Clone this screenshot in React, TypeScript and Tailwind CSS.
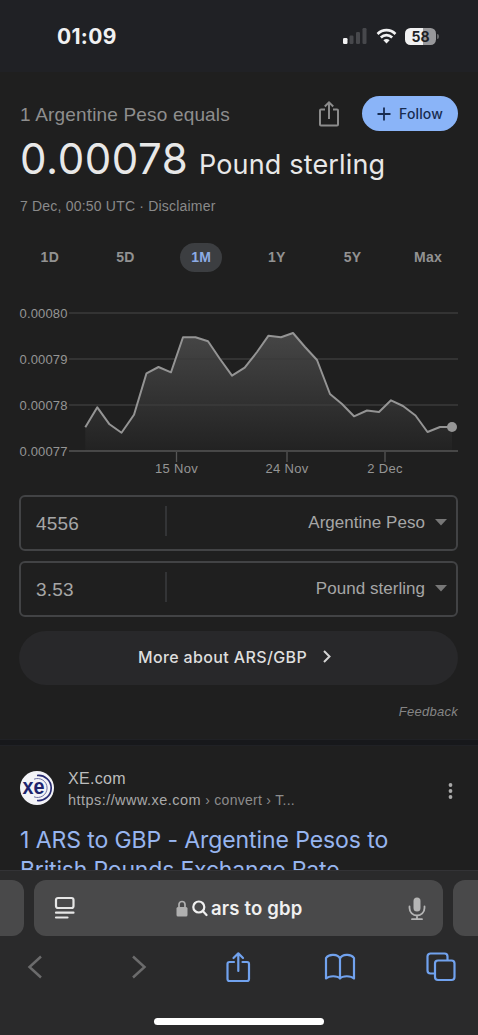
import React from 'react'

const ranges = ["1D", "5D", "1M", "1Y", "5Y", "Max"]

const gridLines = [
  { label: "0.00080", y: 313 },
  { label: "0.00079", y: 359 },
  { label: "0.00078", y: 405 },
  { label: "0.00077", y: 451 }
]

const dates = [
  { label: "15 Nov", x: 176.5 },
  { label: "24 Nov", x: 287 },
  { label: "2 Dec", x: 385 }
]

const points = [
  [85.3, 427.3], [97.3, 407.3], [109.5, 424.3], [121.5, 432.7], [134, 414.7],
  [146.5, 373.3], [158.5, 367], [171, 372.3], [183, 337.3], [195.5, 337.3],
  [208, 341.3], [220, 359], [232, 375.7], [244.7, 367.7], [257, 352],
  [268.5, 335.7], [281, 337.3], [293, 333], [305, 347], [317, 360],
  [330, 394], [342, 404], [354, 416.3], [367, 410.5], [379, 412],
  [391, 400.3], [403, 406], [415.5, 415.5], [427.5, 432], [440, 427], [452, 427]
]

const line = points.map((p) => p.join(',')).join(' ')

const rows = [
  { amount: "4556", currency: "Argentine Peso" },
  { amount: "3.53", currency: "Pound sterling" }
]

function StatusBar() {
  return (
    <header className="flex h-[72px] items-center justify-between bg-[#202125] pl-[57px] pr-[39px]">
      <span className="pt-px text-[21px] font-bold tracking-[0.015em] text-[#f1f1f2]">01:09</span>
      <div className="flex items-center">
        <svg width="25" height="18" viewBox="0 0 25 18">
          <rect x="0" y="11" width="4.5" height="6" rx="1.2" fill="#f1f1f2" />
          <rect x="6.5" y="8.5" width="4" height="8.5" rx="1.2" fill="#47484c" />
          <rect x="13" y="5" width="4" height="12" rx="1.2" fill="#47484c" />
          <rect x="19.5" y="1" width="4" height="16" rx="1.2" fill="#47484c" />
        </svg>
        <svg className="ml-2 mr-[2px]" width="21" height="17" viewBox="0 0 22 18" fill="none" stroke="#f1f1f2" strokeWidth="2.8">
          <path d="M1.5 6.3C7 .9 15 .9 20.5 6.3" />
          <path d="M5 10c3.5-3.3 8.5-3.3 12 0" />
          <path d="M7.7 13c1.9-1.7 4.7-1.7 6.6 0L11 16.5Z" fill="#f1f1f2" stroke="none" />
        </svg>
        <div className="ml-[6px] flex h-[17px] w-[31px] items-center justify-center overflow-hidden rounded-[5.5px] bg-[linear-gradient(90deg,#f1f1f2_58%,#98989b_58%)]">
          <span className="text-[14px] font-bold leading-[17px] text-[#202125]">58</span>
        </div>
        <div className="ml-px h-[5px] w-[2px] rounded-r bg-[#66676a]" />
      </div>
    </header>
  )
}

function Chart() {
  return (
    <svg className="-mx-5 block w-[478px]" height="190" viewBox="0 295 478 190">
      <defs>
        <linearGradient id="area" gradientUnits="userSpaceOnUse" x1="0" y1="333" x2="0" y2="451">
          <stop offset="0" stopColor="#464646" />
          <stop offset="1" stopColor="#222222" />
        </linearGradient>
      </defs>
      <polygon points={`85.3,451 ${line} 452,451`} fill="url(#area)" />
      {gridLines.map((g, i) => (
        <g key={g.label}>
          <path d={`M69 ${g.y}H458`} stroke={i === 3 ? '#565656' : '#3b3b3b'} strokeWidth="1.5" />
          <text x="19.5" y={g.y + 4.5} textLength="48" fontSize="13" fill="#959595">{g.label}</text>
        </g>
      ))}
      {dates.map((d) => (
        <g key={d.label}>
          <path d={`M${d.x} 452V462`} stroke="#565656" strokeWidth="1.3" />
          <text x={d.x} y="473" textAnchor="middle" fontSize="13" letterSpacing="0.3" fill="#959595">{d.label}</text>
        </g>
      ))}
      <polyline points={line} fill="none" stroke="#949494" strokeWidth="2" strokeLinejoin="round" />
      <circle cx="452" cy="427" r="5" fill="#969696" />
    </svg>
  )
}

function Converter() {
  return (
    <main className="flex h-[667px] flex-col bg-[#1f1f1f] px-5 pt-6 font-['Liberation_Sans',sans-serif]">
      <div className="flex h-[35px] items-center">
        <span className="flex-1 whitespace-nowrap pt-[3px] text-[19px] tracking-[0.009em] text-[#8e8e8e]">1 Argentine Peso equals</span>
        <svg className="mr-[22px]" width="22" height="28" viewBox="0 0 22 28" fill="none" stroke="#8c8c8c" strokeWidth="2">
          <path d="M7 9.5H3a1 1 0 0 0-1 1V24.5a1 1 0 0 0 1 1H19a1 1 0 0 0 1-1V10.5a1 1 0 0 0-1-1H15M11 19V3M6.8 6.5 11 2.3 15.2 6.5" />
        </svg>
        <button className="flex h-[35px] w-24 items-center rounded-full bg-[#8ab4f8] pl-[15px] font-[Inter,sans-serif] text-[14px] font-medium tracking-[0.01em] text-[#182c50]">
          <svg className="mr-2" width="14" height="14" viewBox="0 0 14 14" stroke="#182c50" strokeWidth="1.8">
            <path d="M7 .5V13.5M.5 7H13.5" />
          </svg>
          Follow
        </button>
      </div>

      <div className="flex h-[60px] items-baseline whitespace-nowrap pt-[2px] font-[Inter,sans-serif] leading-[52px] text-[#e8e8e8]">
        <span className="w-[179px] text-[42px] font-normal tracking-[0.014em]">0.00078</span>
        <span className="text-[27px] font-normal tracking-[0.006em]">Pound sterling</span>
      </div>
      <p className="h-[30px] pt-[5px] text-[14px] leading-5 tracking-[0.014em] text-[#8a8a8a]">7 Dec, 00:50 UTC · Disclaimer</p>

      <div className="-mx-2 mt-[21px] grid h-[30px] grid-cols-6 place-items-center">
        {ranges.map((r) => (
          <button
            key={r}
            className={`h-[29px] rounded-full text-[14px] font-bold tracking-[0.02em] ${
              r === '1M' ? 'w-[42px] bg-[#3c3e41] text-[#8cabe4]' : 'text-[#929292]'
            }`}
          >
            {r}
          </button>
        ))}
      </div>

      <div className="mt-[23px] h-[190px]">
        <Chart />
      </div>

      <div className="-ml-px mt-[10px] flex flex-col gap-[10px]">
        {rows.map((row) => (
          <div key={row.amount} className="flex h-14 items-center rounded-md border-2 border-[#424345] pl-[15px] pr-[9px] text-[#a6a6a6]">
            <span className="w-[129px] pt-[2px] text-[19px] tracking-[0.01em]">{row.amount}</span>
            <div className="mb-1 h-[30px] w-[2px] bg-[#333436]" />
            <span className="ml-auto pb-px text-[17px] tracking-[0.002em]">{row.currency}</span>
            <svg className="mb-px ml-[10px]" width="12" height="7" viewBox="0 0 12 7" fill="#777777">
              <path d="M0 0H12L6 6.5Z" />
            </svg>
          </div>
        ))}
      </div>

      <button className="-ml-px mt-[14px] flex h-[54px] items-center justify-center gap-4 rounded-full bg-[#28282a] pb-[3px] pr-2 font-[Inter,sans-serif] text-[16px] font-medium tracking-[0.023em] text-[#dedede]">
        More about ARS/GBP
        <svg width="8" height="13" viewBox="0 0 8 13" fill="none" stroke="#d5d5d5" strokeWidth="2">
          <path d="M1 1 6.5 6.5 1 12" />
        </svg>
      </button>
      <p className="mt-[17px] text-right text-[13px] italic leading-5 tracking-[0.02em] text-[#858585]">Feedback</p>
    </main>
  )
}

function Result() {
  return (
    <section className="h-[124px] overflow-hidden bg-[#1f1f1f] px-5 pt-[22px]">
      <div className="flex h-11 font-['Liberation_Sans',sans-serif]">
        <svg className="mt-[3px]" width="34" height="34" viewBox="0 0 34 34">
          <circle cx="17" cy="17" r="17" fill="#f3f3f7" />
          <g fill="none" stroke="#272b73">
            <path d="M14 8.2A9.5 9.5 0 1 1 14 25.8" strokeWidth="1" stroke="#6d70a3" />
            <path d="M17 4.5A12.6 12.6 0 1 1 17 29.5" strokeWidth="1.7" />
          </g>
          <text x="2.5" y="22.5" fontSize="22" fontWeight="bold" textLength="22" lengthAdjust="spacingAndGlyphs" fill="#20246d">xe</text>
        </svg>
        <div className="ml-[14px] flex-1 whitespace-nowrap">
          <p className="text-[16px] leading-[22px] tracking-[0.02em] text-[#bdbdbd]">XE.com</p>
          <p className="text-[14px] leading-[21px] tracking-[0.02em] text-[#8c8c8c]">
            <span className="text-[14.5px] tracking-[0.031em] text-[#a9a9a9]">https://www.xe.com</span> › convert › T...
          </p>
        </div>
        <svg className="mr-[5px] mt-[15px]" width="5" height="16" viewBox="0 0 5 16" fill="#a8a8a8">
          <circle cx="2.5" cy="2" r="1.9" />
          <circle cx="2.5" cy="8" r="1.9" />
          <circle cx="2.5" cy="14" r="1.9" />
        </svg>
      </div>
      <h3 className="mt-[13px] whitespace-nowrap font-[Inter,sans-serif] text-[23px] font-normal leading-[30px] tracking-[-0.004em] text-[#97b5ef]">
        <span className="block">1 ARS to GBP - Argentine Pesos to</span>
        <span className="block tracking-[-0.008em]">British Pounds Exchange Rate</span>
      </h3>
    </section>
  )
}

function BrowserBar() {
  return (
    <footer className="h-[165px] border-t border-[#333336] bg-[#2a2a2b] pt-[9px]">
      <div className="flex h-14 gap-[10px]">
        <div className="w-6 rounded-r-xl bg-[#49494a]" />
        <div className="flex w-[409px] items-center rounded-xl bg-[#49494a] pl-5 pr-[17px]">
          <svg width="22" height="24" viewBox="0 0 22 24" fill="none" stroke="#e6e6e6" strokeWidth="2.2" strokeLinecap="round">
            <rect x="2" y="2" width="17.5" height="10" rx="2" />
            <path d="M2 16.7H19.5M2 21.5H13.5" />
          </svg>
          <div className="ml-[100px] flex flex-1 items-center text-[18.5px] font-semibold text-[#f0f0f0]">
            <svg width="12" height="17" viewBox="0 0 12 17">
              <rect x=".5" y="7" width="11" height="9.5" rx="1.5" fill="#b0b0b0" />
              <path d="M3 8V4.5a3 3 0 0 1 6 0V8" fill="none" stroke="#b0b0b0" strokeWidth="1.7" />
            </svg>
            <svg className="ml-1" width="16" height="17" viewBox="0 0 16 17" fill="none" stroke="#f0f0f0" strokeWidth="2.2" strokeLinecap="round">
              <circle cx="6.8" cy="7" r="5.5" />
              <path d="M11 11.3 14.5 15" />
            </svg>
            <span className="ml-[3px] whitespace-nowrap pt-[2px] tracking-[0.01em]">ars to gbp</span>
          </div>
          <svg width="18" height="25" viewBox="0 0 18 25" fill="none" stroke="#b5b5b5" strokeWidth="1.8" strokeLinecap="round">
            <rect x="5.5" y="1.5" width="7" height="14" rx="3.5" fill="#b5b5b5" stroke="none" />
            <path d="M1.5 10.5V12a7.5 7.5 0 0 0 15 0V10.5M9 19.5V23M4 23.2H14" />
          </svg>
        </div>
        <div className="flex-1 rounded-l-xl bg-[#49494a]" />
      </div>

      <nav className="flex h-[62px] items-center pl-[27px]">
        <svg width="16" height="24" viewBox="0 0 16 24" fill="none" stroke="#6b6b6c" strokeWidth="2.5">
          <path d="M14 1.5 2.5 12 14 22.5" />
        </svg>
        <svg className="ml-[88px]" width="16" height="24" viewBox="0 0 16 24" fill="none" stroke="#6b6b6c" strokeWidth="2.5">
          <path d="M2 1.5 13.5 12 2 22.5" />
        </svg>
        <svg className="ml-[78px]" width="27" height="32" viewBox="0 0 26 32" fill="none" stroke="#71a2ee" strokeWidth="2.2" strokeLinecap="round" strokeLinejoin="round">
          <path d="M8.5 11H4a2 2 0 0 0-2 2V28a2 2 0 0 0 2 2H21.5a2 2 0 0 0 2-2V13a2 2 0 0 0-2-2H17M12.8 20V2.5M8 7 12.8 2.3 17.5 7" />
        </svg>
        <svg className="ml-[72px]" width="32" height="28" viewBox="0 0 32 28" fill="none" stroke="#71a2ee" strokeWidth="2.2" strokeLinejoin="round">
          <path d="M16 5.5C14 1.2 5 .5 2 5V25.5C5 22.5 13.5 22.5 16 25.5C18.5 22.5 27 22.5 30 25.5V5C27 .5 18 1.2 16 5.5ZM16 5.5V25.5" />
        </svg>
        <svg className="ml-[70px]" width="30" height="30" viewBox="0 0 30 30" fill="none" stroke="#71a2ee" strokeWidth="2.2">
          <rect x="9" y="8.5" width="19.5" height="19.5" rx="3" />
          <path d="M8.5 21.5H4.5a3 3 0 0 1-3-3V4.5a3 3 0 0 1 3-3H18.5a3 3 0 0 1 3 3V8" />
        </svg>
      </nav>
      <div className="mx-auto mt-[20px] h-[7px] w-[170px] rounded-full bg-white" />
    </footer>
  )
}

export default function App() {
  return (
    <div className="h-[1035px] w-[478px] overflow-hidden bg-[#1f1f1f] font-[Inter,sans-serif]">
      <StatusBar />
      <Converter />
      {/* Gap between the cards */}
      <div className="h-[7px] border-y border-[#202125] bg-[#17181b]" />
      <Result />
      <BrowserBar />
    </div>
  )
}
